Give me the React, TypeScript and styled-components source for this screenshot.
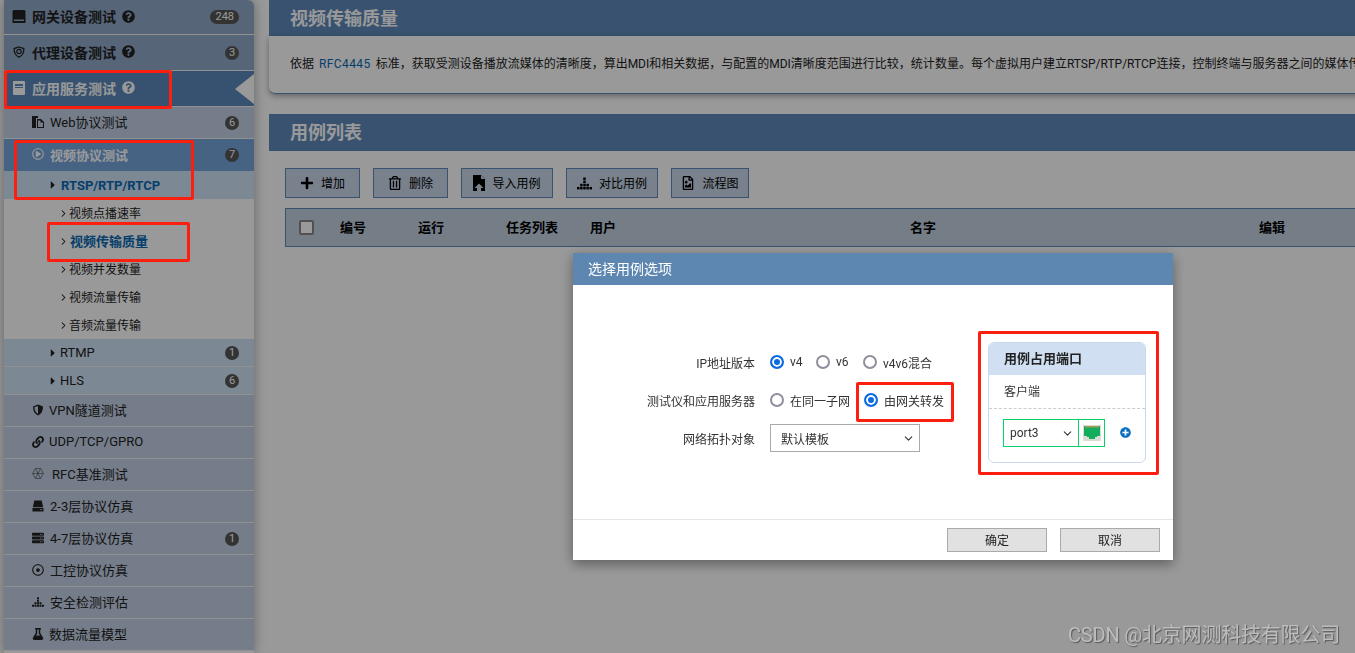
import type { ReactNode } from "react";
import styled, { createGlobalStyle, css } from "styled-components";
import { ChevronDown, ChevronRight } from "lucide-react";
import {
  FaCaretRight,
  FaFlask,
  FaLink,
  FaPlus,
  FaPlusCircle,
  FaQuestionCircle,
  FaRegDotCircle,
  FaRegFileImage,
  FaRegPlayCircle,
  FaRegTrashAlt,
  FaServer,
} from "react-icons/fa";

const FONT = `Roboto, "Noto Sans CJK SC", sans-serif`;

const GlobalStyle = createGlobalStyle`
  html, body {
    margin: 0;
    height: 100%;
    overflow: hidden;
    background: #fff;
    font-family: ${FONT};
  }
  * { box-sizing: border-box; }
`;

type RowKind = "top" | "active" | "second" | "open" | "third" | "item" | "itemOn";

const rowStyles = {
  top: css`
    background: #8fa9c9;
    font-size: 14px;
    font-weight: 700;
    color: #222;
    padding: 0 0 2px 8px;
  `,
  active: css`
    background: #5d89bb;
    font-size: 14px;
    font-weight: 700;
    color: #fff;
    padding: 0 0 2px 8px;
  `,
  second: css`
    background: #c2d0e4;
    font-size: 13px;
    color: #222;
    padding: 0 0 2px 28px;
  `,
  open: css`
    background: #76a6dd;
    font-size: 13px;
    font-weight: 700;
    color: #fff;
    padding: 0 0 2px 28px;
  `,
  third: css`
    background: #d0e3f8;
    font-size: 13px;
    color: #222;
    padding-left: 43px;
  `,
  item: css`
    background: #fff;
    font-size: 12px;
    color: #222;
    padding: 0 0 2px 53px;
  `,
  itemOn: css`
    background: #fff;
    font-size: 13px;
    color: #222;
    padding: 0 0 2px 53px;
  `,
};

const Page = styled.div`
  display: flex;
  width: 1355px;
  height: 653px;
  overflow: hidden;
  padding-left: 4px;
`;

const Sidebar = styled.nav`
  width: 250px;
  flex: none;
  border-top-right-radius: 6px;
  overflow: hidden;
  box-shadow: 0 0 12px rgba(0, 0, 0, 0.35);
  height: 653px;
`;

const Row = styled.div<{ $kind: RowKind; $h: number; $line?: boolean }>`
  position: relative;
  display: flex;
  align-items: center;
  height: ${(p) => p.$h}px;
  border-bottom: ${(p) => (p.$line === false ? "0" : "1px solid #f2f2f2")};
  ${(p) => rowStyles[p.$kind]}
`;

const RowIcon = styled.span<{ $gap?: number; $w?: number }>`
  display: inline-flex;
  align-items: center;
  justify-content: center;
  width: ${(p) => p.$w ?? 12}px;
  margin-right: ${(p) => p.$gap ?? 6}px;
  font-size: 12px;
  flex: none;
`;

const ItemArrow = styled(ChevronRight)`
  margin-top: 2px;
  color: #111;
`;

const Help = styled(FaQuestionCircle)`
  margin-left: 6px;
  font-size: 13px;
`;

const Badge = styled.span<{ $wide?: boolean }>`
  position: absolute;
  right: 15px;
  top: 50%;
  transform: translateY(-50%);
  height: 14px;
  min-width: 14px;
  padding: 0 ${(p) => (p.$wide ? 5 : 0)}px;
  border-radius: 7px;
  background: #555;
  color: #fff;
  font-size: 11px;
  font-weight: 400;
  line-height: 14px;
  text-align: center;
`;

const Arrow = styled.span`
  position: absolute;
  right: 0;
  top: 50%;
  transform: translateY(-50%);
  border-style: solid;
  border-width: 15px 19px 15px 0;
  border-color: transparent #fff transparent transparent;
`;

const RowLink = styled.span<{ $blue?: boolean }>`
  color: ${(p) => (p.$blue ? "#0a69b4" : "inherit")};
  font-weight: ${(p) => (p.$blue ? 700 : "inherit")};
`;

const Main = styled.main`
  flex: 1;
  min-width: 0;
  padding-left: 15px;
`;

const Panel = styled.section<{ $mt: number }>`
  margin-top: ${(p) => p.$mt}px;
  width: 1200px;
  background: #fff;
  border-radius: 6px 0 0 6px;
`;

const PanelTitle = styled.h2<{ $h: number; $shift: number }>`
  margin: 0;
  height: ${(p) => p.$h}px;
  padding: ${(p) => p.$shift}px 0 0 21px;
  background: #5e89bb;
  color: #fff;
  font-size: 18px;
  font-weight: 700;
  line-height: 36px;
`;

const Description = styled.div`
  height: 58px;
  padding: 19px 0 0 21px;
  border-bottom: 1px solid #5e89bb;
  border-radius: 0 0 0 6px;
  box-shadow: 0 2px 6px rgba(0, 0, 0, 0.35);
  font-size: 12px;
  line-height: 18px;
  color: #222;
  white-space: nowrap;
`;

const RfcLink = styled.a`
  color: #0a69b4;
  margin: 0 5px;
  letter-spacing: 0.4px;
`;

const Toolbar = styled.div`
  display: flex;
  gap: 13px;
  padding: 17px 0 10px 16px;
`;

const ToolButton = styled.button<{ $w: number }>`
  display: flex;
  align-items: center;
  justify-content: center;
  gap: 7px;
  width: ${(p) => p.$w}px;
  height: 30px;
  padding: 0;
  border: 1px solid #5e89bb;
  background: #c9d7e9;
  color: #000;
  font: 12px ${FONT};
  svg {
    font-size: 14px;
    flex: none;
  }
`;

const ToolLabel = styled.span`
  margin-bottom: 2px;
`;

const TableHead = styled.div`
  display: grid;
  grid-template-columns: 54px 78px 88px 84px 320px 349px 1fr;
  align-items: center;
  height: 39px;
  margin-left: 16px;
  padding-bottom: 2px;
  border: 1px solid #5e89bb;
  background: #c3d0e2;
  font-size: 13px;
  font-weight: 700;
  color: #000;
`;

const HeadCheck = styled.span`
  justify-self: start;
  margin: 2px 0 0 13px;
  width: 15px;
  height: 15px;
  border: 2px solid #888;
  border-radius: 2px;
  background: #fff;
`;

const Dim = styled.div`
  position: fixed;
  inset: 0;
  background: rgba(0, 0, 0, 0.4);
`;

const Dialog = styled.div`
  position: fixed;
  left: 573px;
  top: 253px;
  width: 600px;
  height: 307px;
  background: #fff;
  box-shadow: 0 4px 12px rgba(0, 0, 0, 0.4);
  display: flex;
  flex-direction: column;
  font-size: 12px;
  color: #333;
`;

const DialogTitle = styled.div`
  height: 32px;
  flex: none;
  padding-left: 15px;
  background: #5d87b1;
  color: #fff;
  font-size: 14px;
  line-height: 32px;
`;

const DialogBody = styled.div`
  flex: 1;
  display: flex;
  justify-content: space-between;
  padding: 57px 27px 0 0;
`;

const Form = styled.div`
  display: grid;
  grid-template-columns: 182px 1fr;
  grid-auto-rows: 38px;
  column-gap: 15px;
  align-items: center;
  margin-top: 1px;
  align-self: flex-start;
`;

const FormLabel = styled.span`
  text-align: right;
`;

const RadioRow = styled.div`
  display: flex;
  align-items: center;
`;

const RadioDot = styled.span<{ $on?: boolean }>`
  width: 14px;
  height: 14px;
  flex: none;
  margin-right: 6px;
  border-radius: 50%;
  border: 2px solid ${(p) => (p.$on ? "#0b6be0" : "#8f8f9d")};
  background: ${(p) => (p.$on ? "#0b6be0" : "#fff")};
  box-shadow: ${(p) => (p.$on ? "inset 0 0 0 2px #fff" : "none")};
`;

const RadioItem = styled.label<{ $w: number }>`
  display: flex;
  align-items: center;
  width: ${(p) => p.$w}px;
  flex: none;
`;

const FakeSelect = styled.div<{ $w: number; $green?: boolean }>`
  display: flex;
  align-items: center;
  justify-content: space-between;
  width: ${(p) => p.$w}px;
  height: 28px;
  padding: 0 4px 0 ${(p) => (p.$green ? 6 : 10)}px;
  border: 1px solid ${(p) => (p.$green ? "#0bcf68" : "#a9a9a9")};
  background: #fff;
`;

const PortCard = styled.div`
  width: 158px;
  height: 121px;
  border: 1px solid #c9d8ea;
  border-radius: 6px;
  overflow: hidden;
`;

const PortTitle = styled.div`
  height: 32px;
  padding-left: 15px;
  background: #d0dff1;
  color: #222;
  font-size: 13px;
  font-weight: 700;
  line-height: 32px;
`;

const PortSub = styled.div`
  height: 34px;
  padding-left: 15px;
  border-bottom: 1px dashed #ccc;
  line-height: 35px;
`;

const PortRow = styled.div`
  display: flex;
  align-items: center;
  padding: 10px 0 0 14px;
`;

const PortIconBox = styled.div`
  display: flex;
  align-items: center;
  justify-content: center;
  width: 27px;
  height: 28px;
  margin-left: -1px;
  border: 1px solid #0bcf68;
`;

const PortAdd = styled(FaPlusCircle)`
  margin: 0 0 2px 15px;
  font-size: 11px;
  color: #0a6fc2;
`;

const DialogFooter = styled.div`
  height: 41px;
  flex: none;
  display: flex;
  justify-content: flex-end;
  gap: 13px;
  padding: 8px 13px 0 0;
  border-top: 1px solid #e5e5e5;
`;

const DialogButton = styled.button`
  width: 100px;
  height: 24px;
  padding: 0 0 2px;
  border: 1px solid #aaa;
  background: #e1e1e1;
  color: #222;
  font: 12px ${FONT};
`;

const Mark = styled.div<{ $x: number; $y: number; $w: number; $h: number }>`
  position: fixed;
  left: ${(p) => p.$x}px;
  top: ${(p) => p.$y}px;
  width: ${(p) => p.$w}px;
  height: ${(p) => p.$h}px;
  border: 3px solid #fc1f10;
  border-radius: 2px;
`;

const Watermark = styled.div`
  position: fixed;
  right: 15px;
  bottom: 5px;
  color: #bdbdbd;
  font-size: 20px;
  letter-spacing: -0.2px;
  text-shadow: 1px 1px 1px #5a5a5a;
  white-space: nowrap;
`;

function HddBlock() {
  return (
    <svg width="14" height="13" viewBox="0 0 14 13" fill="currentColor">
      <path d="M2 0h10a1.500 1.500 0 0 1 1.500 1.500V13H.5V1.500A1.500 1.500 0 0 1 2 0z" />
      <rect x="2" y="9.500" width="10" height="1.500" fill="#8fa9c9" />
    </svg>
  );
}

function HddTrapezoid() {
  return (
    <svg width="13" height="12" viewBox="0 0 13 12" fill="currentColor">
      <path d="M2.500 0h8L12 7H1z" />
      <rect x=".5" y="8" width="12" height="4" rx=".6" />
      <rect x="9" y="9.500" width="2" height="1" fill="#c2d0e4" />
    </svg>
  );
}

function FilesIcon() {
  return (
    <svg width="12" height="12" viewBox="0 0 12 12" fill="currentColor">
      <path d="M0 0h6v2H4v10H0z" />
      <path d="M5 3h4l3 3v6H5z" />
      <path d="M6 4.500V11h5V6.500H8.500v-2z" fill="#c2d0e4" />
    </svg>
  );
}

function Shield() {
  return (
    <svg width="12" height="12" viewBox="0 0 12 12">
      <path d="M6 .6 11 2.400c0 4.600-1.600 7.400-5 9-3.400-1.600-5-4.400-5-9z" fill="currentColor" />
      <path d="M6 2 2.400 3.300c.1 3.200 1.200 5.300 3.600 6.600z" fill="#c2d0e4" />
    </svg>
  );
}

function ProxyIcon() {
  return (
    <svg width="12" height="12" viewBox="0 0 12 12" fill="none" stroke="currentColor">
      <path d="M6 1 10.800 2.600c.2 4-1.400 7-4.800 8.600C2.600 9.600 1 6.600 1.200 2.600z" strokeWidth="1.300" />
      <circle cx="6" cy="5.500" r="2.200" strokeWidth="1.200" />
    </svg>
  );
}

function DocIcon() {
  return (
    <svg width="12" height="14" viewBox="0 0 12 14">
      <rect width="12" height="14" rx="1" fill="currentColor" />
      <rect x="2" y="3" width="8" height="2" fill="#5d89bb" />
      <rect x="2" y="6" width="8" height="1" fill="#5d89bb" />
    </svg>
  );
}

function Hexagon() {
  return (
    <svg width="14" height="13" viewBox="0 0 14 13" fill="none" stroke="#555" strokeWidth=".8">
      <path d="M4 .7h6L13.300 6.500 10 12.300H4L.7 6.500z" />
      <path d="M4 .7 10 12.300M10 .7 4 12.300M.7 6.500h12.600" />
    </svg>
  );
}

function Bars({ size = 12 }: { size?: number }) {
  const cells = [
    [6, 0], [6, 3], [3, 6], [6, 6], [9, 6], [0, 9], [3, 9], [6, 9], [9, 9], [12, 9],
  ];
  return (
    <svg width={size} height={size} viewBox="0 0 14.400 11.400" fill="currentColor">
      {cells.map(([x, y]) => (
        <rect key={`${x}-${y}`} x={x} y={y} width="2.400" height="2.400" />
      ))}
    </svg>
  );
}

function ImportIcon() {
  return (
    <svg width="12" height="16" viewBox="0 0 12 16">
      <path d="M0 0h8l4 4v12H0z" fill="#000" />
      <path d="M8 0v4h4z" fill="#c9d7e9" />
      <path d="M6 8.500 10.500 13H8v3H4v-3H1.500z" fill="#c9d7e9" />
    </svg>
  );
}

function PortIcon() {
  return (
    <svg width="18" height="16" viewBox="0 0 18 16">
      <rect width="18" height="16" fill="#d9ddd4" />
      <rect x="1" y="1" width="16" height="9" fill="#13ad5c" />
      <rect x="2" y="1" width="14" height="1.500" fill="#a89a55" />
      <path d="M1 10h3v2h2v2h6v-2h2v-2h3v1H1z" fill="#13ad5c" />
      <path d="M4 10h10v2h-2v2H6v-2H4z" fill="#13ad5c" />
    </svg>
  );
}

const itemArrow = <ItemArrow size={11} strokeWidth={2.2} />;

const sideRows: {
  kind: RowKind;
  h: number;
  label: string;
  icon?: ReactNode;
  badge?: string;
  help?: boolean;
  blue?: boolean;
  line?: boolean;
  gap?: number;
  iconW?: number;
}[] = [
  { kind: "top", h: 35, label: "网关设备测试", icon: <HddBlock />, badge: "248", help: true, iconW: 14 },
  { kind: "top", h: 36, label: "代理设备测试", icon: <ProxyIcon />, badge: "3", help: true, iconW: 14 },
  { kind: "active", h: 36, label: "应用服务测试", icon: <DocIcon />, help: true, iconW: 14 },
  { kind: "second", h: 32, label: "Web协议测试", icon: <FilesIcon />, badge: "6" },
  { kind: "open", h: 32, label: "视频协议测试", icon: <FaRegPlayCircle />, badge: "7", line: false },
  { kind: "third", h: 28, label: "RTSP/RTP/RTCP", icon: <FaCaretRight />, blue: true, line: false, gap: 2 },
  { kind: "item", h: 28, label: "视频点播速率", icon: itemArrow, line: false, gap: 0 },
  { kind: "itemOn", h: 28, label: "视频传输质量", icon: itemArrow, blue: true, line: false, gap: 1 },
  { kind: "item", h: 28, label: "视频并发数量", icon: itemArrow, line: false, gap: 0 },
  { kind: "item", h: 28, label: "视频流量传输", icon: itemArrow, line: false, gap: 0 },
  { kind: "item", h: 28, label: "音频流量传输", icon: itemArrow, line: false, gap: 0 },
  { kind: "third", h: 28, label: "RTMP", icon: <FaCaretRight />, badge: "1", gap: 1 },
  { kind: "third", h: 28, label: "HLS", icon: <FaCaretRight />, badge: "6", gap: 1 },
  { kind: "second", h: 32, label: "VPN隧道测试", icon: <Shield />, gap: 5 },
  { kind: "second", h: 32, label: "UDP/TCP/GPRO", icon: <FaLink />, gap: 5 },
  { kind: "second", h: 32, label: "RFC基准测试", icon: <Hexagon />, gap: 8 },
  { kind: "second", h: 32, label: "2-3层协议仿真", icon: <HddTrapezoid /> },
  { kind: "second", h: 32, label: "4-7层协议仿真", icon: <FaServer />, badge: "1" },
  { kind: "second", h: 32, label: "工控协议仿真", icon: <FaRegDotCircle /> },
  { kind: "second", h: 32, label: "安全检测评估", icon: <Bars /> },
  { kind: "second", h: 32, label: "数据流量模型", icon: <FaFlask />, gap: 5 },
];

const tools: { label: string; w: number; icon: ReactNode }[] = [
  { label: "增加", w: 75, icon: <FaPlus /> },
  { label: "删除", w: 75, icon: <FaRegTrashAlt /> },
  { label: "导入用例", w: 92, icon: <ImportIcon /> },
  { label: "对比用例", w: 92, icon: <Bars size={15} /> },
  { label: "流程图", w: 78, icon: <FaRegFileImage /> },
];

const marks = [
  { x: 4, y: 70, w: 168, h: 39 },
  { x: 14, y: 140, w: 180, h: 60 },
  { x: 47, y: 222, w: 143, h: 40 },
  { x: 856, y: 382, w: 98, h: 40 },
  { x: 978, y: 331, w: 181, h: 144 },
];

export default function App() {
  return (
    <>
      <GlobalStyle />
      <Page>
        <Sidebar>
          {sideRows.map((row) => (
            <Row key={row.label} $kind={row.kind} $h={row.h} $line={row.line}>
              <RowIcon $gap={row.gap} $w={row.iconW}>{row.icon}</RowIcon>
              <RowLink $blue={row.blue}>{row.label}</RowLink>
              {row.help && <Help />}
              {row.badge && <Badge $wide={row.badge.length > 1}>{row.badge}</Badge>}
              {row.kind === "active" && <Arrow />}
            </Row>
          ))}
        </Sidebar>
        <Main>
          <Panel $mt={0}>
            <PanelTitle $h={36} $shift={1}>视频传输质量</PanelTitle>
            <Description>
              依据<RfcLink>RFC4445</RfcLink>标准，获取受测设备播放流媒体的清晰度，算出MDI和相关数据，与配置的MDI清晰度范围进行比较，统计数量。每个虚拟用户建立RTSP/RTP/RTCP连接，控制终端与服务器之间的媒体传输
            </Description>
          </Panel>
          <Panel $mt={20}>
            <PanelTitle $h={37} $shift={1}>用例列表</PanelTitle>
            <Toolbar>
              {tools.map((tool) => (
                <ToolButton key={tool.label} $w={tool.w}>
                  {tool.icon}
                  <ToolLabel>{tool.label}</ToolLabel>
                </ToolButton>
              ))}
            </Toolbar>
            <TableHead>
              <HeadCheck />
              <span>编号</span>
              <span>运行</span>
              <span>任务列表</span>
              <span>用户</span>
              <span>名字</span>
              <span>编辑</span>
            </TableHead>
          </Panel>
        </Main>
      </Page>
      <Dim />
      <Dialog>
        <DialogTitle>选择用例选项</DialogTitle>
        <DialogBody>
          <Form>
            <FormLabel>IP地址版本</FormLabel>
            <RadioRow>
              <RadioItem $w={46}><RadioDot $on />v4</RadioItem>
              <RadioItem $w={47}><RadioDot />v6</RadioItem>
              <RadioItem $w={80}><RadioDot />v4v6混合</RadioItem>
            </RadioRow>
            <FormLabel>测试仪和应用服务器</FormLabel>
            <RadioRow>
              <RadioItem $w={94}><RadioDot />在同一子网</RadioItem>
              <RadioItem $w={90}><RadioDot $on />由网关转发</RadioItem>
            </RadioRow>
            <FormLabel>网络拓扑对象</FormLabel>
            <FakeSelect $w={150}>
              默认模板
              <ChevronDown size={13} strokeWidth={2} />
            </FakeSelect>
          </Form>
          <PortCard>
            <PortTitle>用例占用端口</PortTitle>
            <PortSub>客户端</PortSub>
            <PortRow>
              <FakeSelect $w={76} $green>
                port3
                <ChevronDown size={13} strokeWidth={2} />
              </FakeSelect>
              <PortIconBox>
                <PortIcon />
              </PortIconBox>
              <PortAdd />
            </PortRow>
          </PortCard>
        </DialogBody>
        <DialogFooter>
          <DialogButton>确定</DialogButton>
          <DialogButton>取消</DialogButton>
        </DialogFooter>
      </Dialog>
      {marks.map((m) => (
        <Mark key={m.x} $x={m.x} $y={m.y} $w={m.w} $h={m.h} />
      ))}
      <Watermark>CSDN @北京网测科技有限公司</Watermark>
    </>
  );
}
